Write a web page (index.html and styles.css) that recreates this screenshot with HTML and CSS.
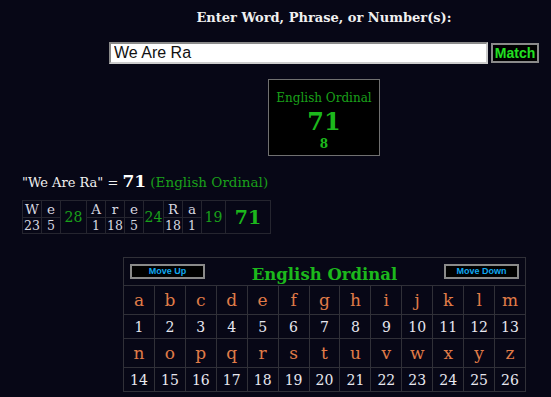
FILE: index.html
```html
<!DOCTYPE html>
<html lang="en">
<head>
    <meta charset="UTF-8">
    <meta name="viewport" content="width=device-width, initial-scale=1.0">
    <title>Gematria Calculator</title>
    <link rel="stylesheet" href="styles.css">
</head>
<body>
    <div class="search-block">
        <div class="enter-title">Enter Word, Phrase, or Number(s):</div>
        <div class="search-row">
            <input type="text" id="phrase-input" value="We Are Ra">
            <button id="match-button">Match</button>
        </div>
        <div class="cipher-box">
            <div class="cipher-name">English Ordinal</div>
            <div class="cipher-value">71</div>
            <div class="cipher-reduced">8</div>
        </div>
    </div>

    <div class="result-line">"We Are Ra" = <b class="result-num">71</b> <span class="result-cipher">(English Ordinal)</span></div>

    <table class="breakdown">
        <tr>
            <td class="ltr">W</td><td class="ltr">e</td><td class="word-sum sum-a" rowspan="2">28</td>
            <td class="ltr">A</td><td class="ltr">r</td><td class="ltr">e</td><td class="word-sum sum-b" rowspan="2">24</td>
            <td class="ltr">R</td><td class="ltr">a</td><td class="word-sum sum-c" rowspan="2">19</td>
            <td class="total" rowspan="2">71</td>
        </tr>
        <tr>
            <td class="num">23</td><td class="num">5</td>
            <td class="num">1</td><td class="num">18</td><td class="num">5</td>
            <td class="num">18</td><td class="num">1</td>
        </tr>
    </table>

    <table class="chart">
        <tr class="chart-head">
            <td colspan="13">
                <div class="chart-head-row">
                    <button class="move-btn">Move Up</button>
                    <span class="chart-title">English Ordinal</span>
                    <button class="move-btn">Move Down</button>
                </div>
            </td>
        </tr>
        <tr class="letters">
            <td>a</td><td>b</td><td>c</td><td>d</td><td>e</td><td>f</td><td>g</td><td>h</td><td>i</td><td>j</td><td>k</td><td>l</td><td>m</td>
        </tr>
        <tr class="values">
            <td>1</td><td>2</td><td>3</td><td>4</td><td>5</td><td>6</td><td>7</td><td>8</td><td>9</td><td>10</td><td>11</td><td>12</td><td>13</td>
        </tr>
        <tr class="letters">
            <td>n</td><td>o</td><td>p</td><td>q</td><td>r</td><td>s</td><td>t</td><td>u</td><td>v</td><td>w</td><td>x</td><td>y</td><td>z</td>
        </tr>
        <tr class="values">
            <td>14</td><td>15</td><td>16</td><td>17</td><td>18</td><td>19</td><td>20</td><td>21</td><td>22</td><td>23</td><td>24</td><td>25</td><td>26</td>
        </tr>
    </table>
</body>
</html>
```

FILE: styles.css
```css
body {
    margin: 0;
    background-color: #070716;
    color: #e8e8e8;
    font-family: "DejaVu Serif", serif;
}
.search-block {
    width: 430px;
    margin-left: 109px;
    padding-top: 10px;
}
.enter-title {
    text-align: center;
    font-weight: bold;
    font-size: 13px;
    color: #f0f0f0;
    height: 16px;
    line-height: 16px;
}
.search-row {
    display: flex;
    align-items: center;
    margin-top: 16px;
}
#phrase-input {
    width: 379px;
    height: 22px;
    box-sizing: border-box;
    border: 2px solid #8a8a8a;
    border-right-color: #ccc;
    border-bottom-color: #ccc;
    padding: 0 3px;
    font-family: "Liberation Sans", Arial, sans-serif;
    font-size: 16px;
    color: #111;
    background: #fff;
    margin: 0;
}
#match-button {
    margin-left: 3px;
    width: 48px;
    height: 20px;
    box-sizing: border-box;
    padding: 0;
    background: #000;
    border: 2px solid #8a8a8a;
    color: #22e022;
    font-family: "Liberation Sans", Arial, sans-serif;
    font-weight: bold;
    font-size: 14px;
}
.cipher-box {
    width: 112px;
    height: 77px;
    box-sizing: border-box;
    margin: 15px auto 0;
    border: 1px solid #707070;
    background: #000;
    text-align: center;
    color: #1aa01a;
    padding-top: 10px;
}
.cipher-name {
    font-size: 12px;
    line-height: 16px;
}
.cipher-value {
    font-size: 24px;
    font-weight: bold;
    line-height: 32px;
    color: #1cb81c;
}
.cipher-reduced {
    font-size: 12px;
    font-weight: bold;
    line-height: 12px;
    color: #1cb81c;
}
.result-line {
    margin-top: 14px;
    padding-left: 22px;
    font-size: 13px;
    color: #f0f0f0;
    height: 22px;
    line-height: 22px;
}
.result-num {
    font-size: 17px;
    color: #fff;
}
.result-cipher {
    font-size: 13.5px;
    color: #1aa01a;
}
.breakdown {
    margin-left: 22px;
    margin-top: 8px;
    border-collapse: collapse;
}
.breakdown td {
    border: 1px solid #25252f;
    text-align: center;
    padding: 0;
}
.breakdown .ltr {
    min-width: 18px;
    width: 18px;
    height: 16px;
    font-size: 13.5px;
    line-height: 16px;
    color: #d8d8e0;
}
.breakdown .num {
    height: 15px;
    font-size: 12.5px;
    line-height: 15px;
    color: #d8d8e0;
}
.breakdown .word-sum {
    font-size: 14px;
    color: #1aa01a;
}
.breakdown .sum-a {
    width: 25px;
}
.breakdown .sum-b {
    width: 19px;
}
.breakdown .sum-c {
    width: 23px;
}
.breakdown .total {
    width: 44px;
    font-size: 19px;
    font-weight: bold;
    color: #1cb81c;
}
.chart {
    margin-left: 123px;
    margin-top: 23px;
    width: 403px;
    border-collapse: collapse;
    table-layout: fixed;
}
.chart td {
    border: 1px solid #303038;
    text-align: center;
    padding: 0;
}
.chart-head td {
    height: 27px;
}
.chart-head-row {
    display: flex;
    justify-content: space-between;
    align-items: center;
    padding: 0 6px;
}
.chart-title {
    font-weight: bold;
    font-size: 16.5px;
    color: #1cb81c;
    padding-top: 5px;
}
.move-btn {
    width: 75px;
    height: 15px;
    box-sizing: border-box;
    padding: 0;
    background: #000;
    border: 2px solid #8a8a8a;
    color: #10a8f0;
    font-family: "Liberation Sans", Arial, sans-serif;
    font-weight: bold;
    font-size: 9px;
    line-height: 11px;
}
.letters td {
    height: 28px;
    font-size: 17px;
    color: #e07c48;
}
.values td {
    height: 23px;
    font-size: 14px;
    color: #e8e8f0;
}
```
